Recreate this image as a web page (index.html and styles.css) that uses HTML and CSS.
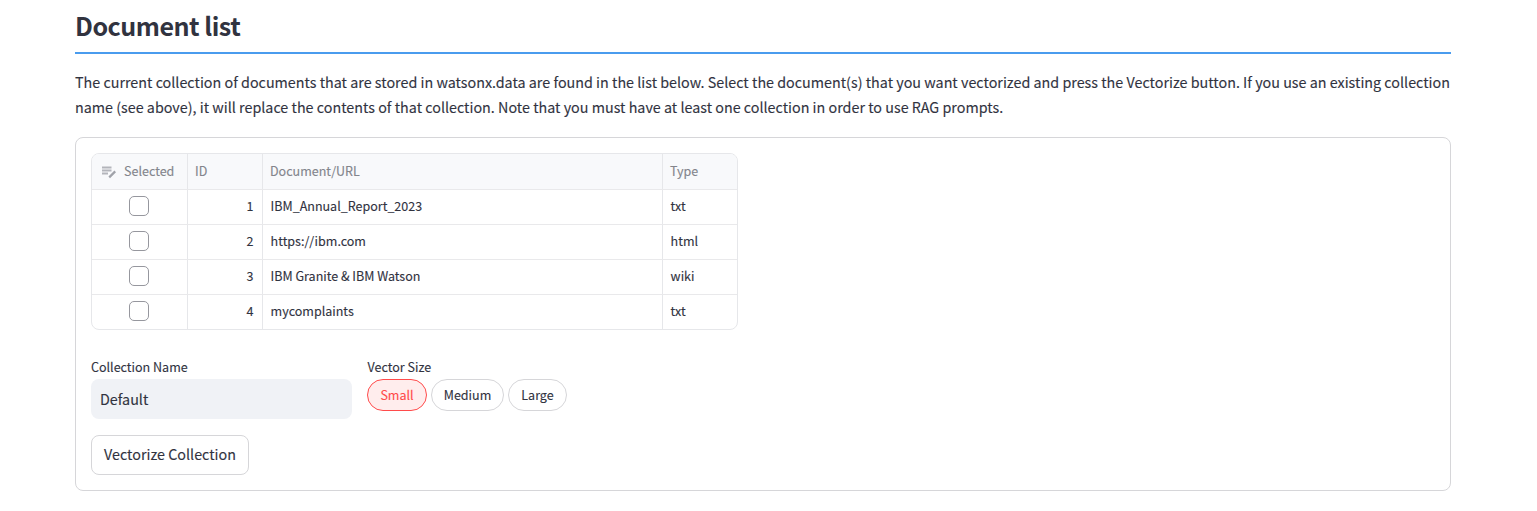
FILE: index.html
```html
<!DOCTYPE html>
<html lang="en">
<head>
<meta charset="utf-8">
<title>Document list</title>
<link rel="stylesheet" href="styles.css">
</head>
<body>
<main class="page">
  <h2 class="title">Document list</h2>
  <p class="intro"><span class="line first">The current collection of documents that are stored in watsonx.data are found in the list below. Select the document(s) that you want vectorized and press the Vectorize button. If you use an existing collection</span> <span class="line second">name (see above), it will replace the contents of that collection. Note that you must have at least one collection in order to use RAG prompts.</span></p>
  <section class="card">
    <div class="table">
      <div class="row head">
        <div class="cell select"><svg class="edit" width="16" height="16" viewBox="0 0 16 16"><path d="M1 3.5h9.5M1 6.5h9.5M1 9.5h6" fill="none" stroke="#b3b5bb" stroke-width="1.8"/><path d="M8.2 13.4l6-6" fill="none" stroke="#a0a2a9" stroke-width="2.2"/></svg><span class="t-selected">Selected</span></div>
        <div class="cell id">ID</div><div class="cell doc">Document/URL</div><div class="cell type">Type</div>
      </div>
      <div class="row"><div class="cell check"><span class="box"></span></div><div class="cell num">1</div><div class="cell doc">IBM_Annual_Report_2023</div><div class="cell type">txt</div></div>
      <div class="row"><div class="cell check"><span class="box"></span></div><div class="cell num">2</div><div class="cell doc">https://ibm.com</div><div class="cell type">html</div></div>
      <div class="row"><div class="cell check"><span class="box"></span></div><div class="cell num">3</div><div class="cell doc">IBM Granite &amp; IBM Watson</div><div class="cell type">wiki</div></div>
      <div class="row"><div class="cell check"><span class="box"></span></div><div class="cell num">4</div><div class="cell doc">mycomplaints</div><div class="cell type">txt</div></div>
    </div>
    <div class="fields">
      <div class="field name">
        <div class="label">Collection Name</div>
        <div class="input">Default</div>
      </div>
      <div class="field">
        <div class="label size">Vector Size</div>
        <div class="pills"><span class="pill small active">Small</span><span class="pill medium">Medium</span><span class="pill large">Large</span></div>
      </div>
    </div>
    <div class="button">Vectorize Collection</div>
  </section>
</main>
</body>
</html>
```

FILE: styles.css
```css
* { box-sizing: border-box; }
body {
  margin: 0;
  background: #fff;
  color: #31333f;
  font-family: "Noto Sans CJK SC", "Noto Sans", sans-serif;
  font-size: 14.32px;
  -webkit-text-stroke: 0.12px;
}
.page { width: 1376px; margin-left: 75px; }
.title {
  margin: 0;
  height: 54px;
  border-bottom: 2px solid #4a9cee;
  font-size: 25.07px;
  font-weight: 700;
  line-height: 50px;
  letter-spacing: -0.5px;
  -webkit-text-stroke: 0;
}
.intro { margin: 15px 0 18px; line-height: 25px; letter-spacing: 0.005px; }
.line { display: block; white-space: nowrap; }
.card {
  height: 354px;
  padding: 15px;
  border: 1px solid #d6d6d9;
  border-radius: 8px;
}
.table {
  width: 647px;
  height: 177px;
  border: 1px solid #e6e7ea;
  border-radius: 8px;
  overflow: hidden;
  font-size: 12.53px;
}
.row {
  display: grid;
  grid-template-columns: 96px 75px 400px 74px;
  height: 35px;
  border-bottom: 1px solid #e9e9eb;
  line-height: 31px;
}
.row:last-child { border-bottom: 0; }
.head {
  height: 36px;
  background: #f8f9fb;
  color: #83858c;
  line-height: 33px;
}
.cell { padding-left: 7.6px; border-right: 1px solid #e6e7ea; white-space: nowrap; }
.head .cell { padding-left: 7px; }
.cell:last-child { border-right: 0; }
.head .select { display: flex; gap: 7px; padding-left: 9px; }
.edit { margin-top: 10px; }
.check { display: flex; justify-content: center; padding: 6px 2px 0 0; }
.box { width: 20px; height: 20px; border: 1px solid #96979e; border-radius: 5px; }
.num { padding-right: 8.6px; text-align: right; }
.fields { display: flex; gap: 15px; margin-top: 27px; }
.label { height: 22px; font-size: 12.53px; line-height: 20px; }
.size { padding-left: 0.6px; }
.name { width: 261px; }
.input {
  height: 40px;
  padding-left: 9px;
  border-radius: 8px;
  background: #f0f2f6;
  line-height: 40px;
}
.pills { display: flex; gap: 4px; }
.pill {
  height: 32px;
  border: 1px solid #d6d6d9;
  border-radius: 16px;
  font-size: 12.53px;
  line-height: 30px;
  text-align: center;
}
.small { width: 60px; }
.medium { width: 73px; }
.large { width: 59px; }
.active { border-color: #ff4b4b; background: #ffeded; color: #ff4b4b; }
.button {
  width: 158px;
  height: 40px;
  margin-top: 16px;
  border: 1px solid #d6d6d9;
  border-radius: 8px;
  line-height: 35px;
  text-align: center;
}
```
